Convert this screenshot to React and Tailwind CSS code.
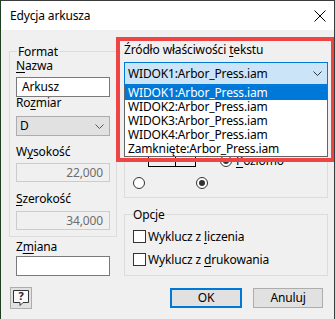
import React from "react";

function U({ children }) {
  return <span className="underline underline-offset-[2px] decoration-1">{children}</span>;
}

function Radio({ checked }) {
  return (
    <span className="w-[12px] h-[12px] rounded-full border border-[#333333] bg-white flex items-center justify-center shrink-0">
      {checked && <span className="w-[6px] h-[6px] rounded-full bg-[#333333]" />}
    </span>
  );
}

function Check() {
  return <span className="w-[13px] h-[13px] border border-[#333333] bg-white shrink-0" />;
}

function Chevron({ color = "#444444" }) {
  return (
    <svg width="9" height="5" viewBox="0 0 9 5" className="shrink-0">
      <path d="M0.5 0.5 L4.5 4.5 L8.5 0.5" fill="none" stroke={color} strokeWidth="1" />
    </svg>
  );
}

export default function App() {
  const items = [
    "WIDOK1:Arbor_Press.iam",
    "WIDOK2:Arbor_Press.iam",
    "WIDOK3:Arbor_Press.iam",
    "WIDOK4:Arbor_Press.iam",
    "Zamknięte:Arbor_Press.iam",
  ];
  return (
    <div className="relative w-[335px] h-[319px] overflow-hidden bg-[#f0f0f0] border-x border-t border-l-[#1f3d1f] border-r-[#3b3b3b] border-t-[#3b3b3b] font-['Noto_Sans',sans-serif] text-[12px] leading-[12px] tracking-[-0.15px] text-black">
      {/* Title bar */}
      <div className="h-[29px] bg-white flex items-center justify-between pl-[9px] pr-[8px]">
        <span>Edycja arkusza</span>
        <svg width="12" height="12" viewBox="0 0 12 12">
          <path d="M0.5 0.5 L11.5 11.5 M11.5 0.5 L0.5 11.5" stroke="#000" strokeWidth="1" />
        </svg>
      </div>

      {/* Body */}
      <div className="flex flex-col pl-[8px] pr-[6px]">
        <div className="flex gap-[7px]">
          {/* Left column */}
          <div className="w-[108px] pt-[14px] flex flex-col">
            <fieldset className="border border-[#dcdcdc] px-[6px] pb-[6px]">
              <legend className="ml-[1px] px-[1px] leading-[15px]">Format</legend>
              <div className="mt-[1px]"><U>N</U>azwa</div>
              <div className="mt-[5px] h-[20px] bg-white border border-[#7a7a7a] flex items-center pl-[5px]">Arkusz</div>
              <div>Ro<U>z</U>miar</div>
              <div className="mt-[7px] h-[20px] bg-[#e1e1e1] border border-[#adadad] flex items-center justify-between pl-[3px] pr-[5px]">
                <span>D</span>
                <Chevron color="#555555" />
              </div>
              <div className="mt-[10px]">W<U>y</U>sokość</div>
              <div className="mt-[5px] h-[19px] bg-[#f0f0f0] border border-[#cccccc] flex items-center justify-end pr-[6px] text-[#6d6d6d]">22,000</div>
              <div className="mt-[11px]"><U>S</U>zerokość</div>
              <div className="mt-[6px] h-[19px] bg-[#f0f0f0] border border-[#cccccc] flex items-center justify-end pr-[6px] text-[#6d6d6d]">34,000</div>
            </fieldset>
            <div className="mt-[4px] ml-[7px]">Z<U>m</U>iana</div>
            <div className="mt-[3px] ml-[7px] w-[94px] h-[20px] bg-white border border-[#7a7a7a]" />
          </div>

          {/* Right column */}
          <div className="w-[204px] pt-[14px] flex flex-col">
            <div>Źródło właściwości <U>t</U>ekstu</div>
            <div className="relative mt-[6px]">
              <div className="h-[23px] bg-[#cce4f7] border border-[#0078d7] flex items-center justify-between pl-[3px] pr-[5px]">
                <span>WIDOK1:Arbor_Press.iam</span>
                <Chevron color="#333333" />
              </div>
              {/* Dropdown list overlay */}
              <div className="absolute left-0 right-0 top-[23px] z-10 bg-white border border-[#646464] flex flex-col">
                {items.map((t, i) => (
                  <div
                    key={t}
                    className={
                      i === 0
                        ? "h-[14px] leading-[14px] pl-[3px] bg-[#0078d7] text-white"
                        : "h-[14px] leading-[14px] pl-[3px]"
                    }
                  >
                    {t}
                  </div>
                ))}
              </div>
            </div>

            <fieldset className="mt-[4px] border border-[#dcdcdc] px-[8px] pb-[8px]">
              <div className="mt-[20px] flex items-end">
                <svg width="48" height="57" viewBox="0 0 48 57" className="ml-[15px] shrink-0">
                  <rect x="0.5" y="0.5" width="47" height="56" fill="none" stroke="#000" />
                  <path d="M0.5 46.5 H47.5 M27.5 46.5 V56.5" fill="none" stroke="#000" />
                </svg>
                <div className="ml-[24px] flex items-center gap-[4px]">
                  <Radio checked />
                  <span><U>P</U>oziomo</span>
                </div>
              </div>
              <div className="mt-[10px] flex gap-[51px]">
                <Radio />
                <Radio checked />
              </div>
            </fieldset>

            <fieldset className="mt-[9px] border border-[#dcdcdc] px-[8px] pb-[9px]">
              <legend className="leading-[15px]">Opc<U>j</U>e</legend>
              <div className="mt-[8px] flex items-center gap-[2px]">
                <Check />
                <span>Wyklucz z <U>l</U>iczenia</span>
              </div>
              <div className="mt-[10px] flex items-center gap-[2px]">
                <Check />
                <span>Wyklucz z <U>d</U>rukowania</span>
              </div>
            </fieldset>
          </div>
        </div>

        {/* Bottom row */}
        <div className="mt-[11px] flex items-center justify-between">
          <div className="ml-[1px] w-[22px] h-[22px] bg-[#e1e1e1] border border-[#adadad] flex items-center justify-center">
            <svg width="20" height="20" viewBox="0 0 20 20">
              <path d="M2.5 2.5 H17.5 V14.5 H12 L9 17.5 V14.5 H2.5 Z" fill="#fafafa" stroke="#333333" strokeWidth="1" />
              <text x="10" y="12" textAnchor="middle" fontSize="11" fontWeight="bold" fontFamily="Noto Sans, sans-serif" fill="#222222">?</text>
            </svg>
          </div>
          <div className="flex gap-[11px] mr-[5px]">
            <div className="w-[72px] h-[20px] bg-[#e1e1e1] border-2 border-[#0078d7] flex items-center justify-center">OK</div>
            <div className="w-[70px] h-[20px] bg-[#e1e1e1] border border-[#adadad] flex items-center justify-center">Anuluj</div>
          </div>
        </div>
      </div>

      {/* Red annotation box */}
      <div className="absolute left-[115px] top-[36px] w-[219px] h-[125px] border-4 border-[#ef4444] z-20 pointer-events-none" />
    </div>
  );
}
